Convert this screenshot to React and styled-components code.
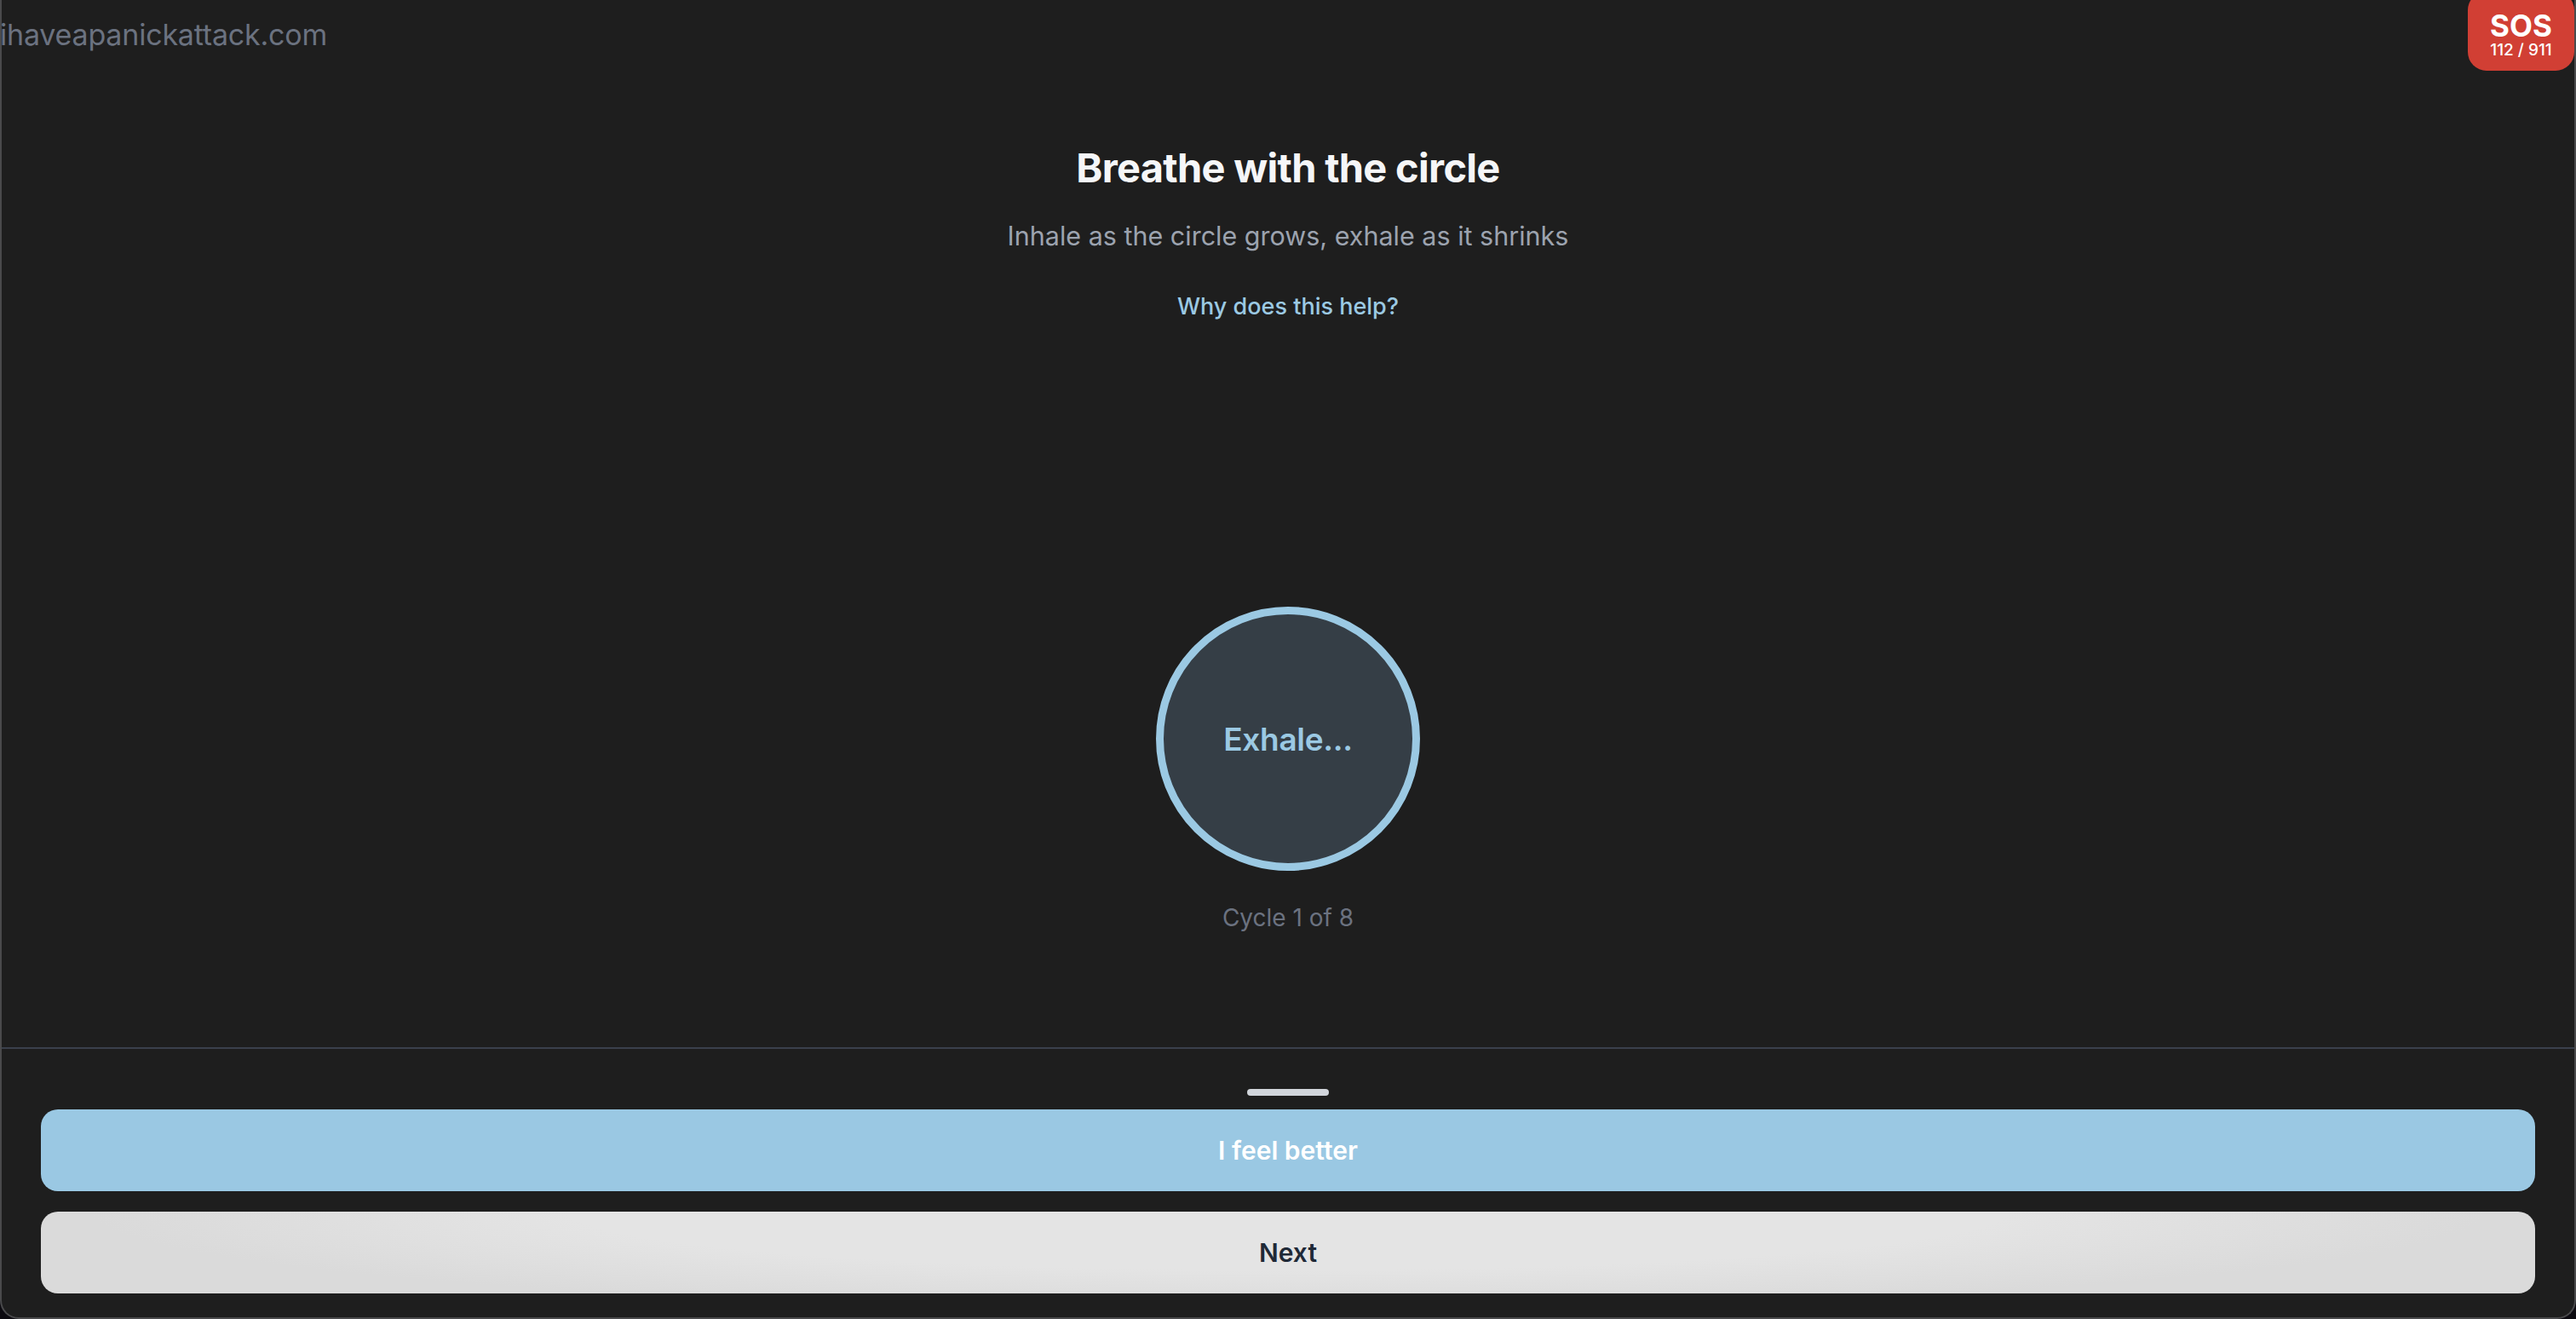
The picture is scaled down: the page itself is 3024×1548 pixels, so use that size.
import React from "react";
import styled, { createGlobalStyle } from "styled-components";

const GlobalStyle = createGlobalStyle`
  html, body {
    margin: 0;
    padding: 0;
    background: #0c0a10;
  }
  * {
    box-sizing: border-box;
  }
`;

const Frame = styled.div`
  display: flex;
  flex-direction: column;
  height: 100vh;
  background-color: #1e1e1e;
  border: 2px solid #4a4a4c;
  border-top: none;
  border-radius: 0 0 22px 22px;
  font-family: Inter, "Noto Sans", "Liberation Sans", sans-serif;
  overflow: hidden;
`;

const TopBar = styled.header`
  display: flex;
  justify-content: space-between;
  align-items: flex-start;
  height: 83px;
`;

const Domain = styled.span`
  margin-top: 20px;
  margin-left: -2px;
  font-size: 34px;
  line-height: 42px;
  color: #6b7280;
  letter-spacing: -0.2px;
`;

const SosButton = styled.button`
  display: flex;
  flex-direction: column;
  align-items: center;
  justify-content: center;
  width: 125px;
  height: 93px;
  margin-top: -10px;
  padding: 8px 0 0;
  border: none;
  border-radius: 22px;
  background-color: #d13f34;
  color: #ffffff;
  font-family: inherit;
  cursor: pointer;
`;

const SosLabel = styled.span`
  font-size: 35px;
  font-weight: 700;
  line-height: 34px;
  margin-top: 2px;
`;

const SosNumbers = styled.span`
  font-size: 19px;
  font-weight: 500;
  line-height: 24px;
`;

const Main = styled.main`
  flex: 1;
  display: flex;
  flex-direction: column;
  align-items: center;
`;

const Title = styled.h1`
  margin: 86px 0 0;
  font-size: 47px;
  font-weight: 700;
  line-height: 56px;
  color: #f5f6f8;
  letter-spacing: -0.7px;
`;

const Subtitle = styled.p`
  margin: 30px 0 0;
  font-size: 30.5px;
  line-height: 44px;
  color: #9ca3af;
`;

const HelpLink = styled.a`
  margin-top: 41px;
  font-size: 27px;
  line-height: 40px;
  font-weight: 500;
  color: #9bc9e3;
  text-decoration: none;
  cursor: pointer;
`;

const Circle = styled.div`
  display: flex;
  align-items: center;
  justify-content: center;
  width: 310px;
  height: 310px;
  margin-top: 332px;
  border-radius: 50%;
  border: 9px solid #9bc9e3;
  background-color: #353e46;
`;

const Phase = styled.span`
  font-size: 37px;
  font-weight: 600;
  color: #9bc9e3;
  letter-spacing: -0.3px;
`;

const CycleText = styled.p`
  margin: 35px 0 0;
  font-size: 28px;
  line-height: 40px;
  color: #6b7280;
`;

const Sheet = styled.footer`
  display: flex;
  flex-direction: column;
  align-items: center;
  gap: 24px;
  padding: 47px 46px 28px 46px;
  border-top: 2px solid #3a404c;
`;

const Handle = styled.div`
  width: 96px;
  height: 8px;
  margin-bottom: -8px;
  border-radius: 4px;
  background-color: #d1d5db;
`;

const ActionButton = styled.button`
  width: 100%;
  height: 96px;
  border: none;
  border-radius: 20px;
  font-family: inherit;
  font-size: 30px;
  font-weight: 600;
  cursor: pointer;
  color: ${(props) => (props.primary ? "#ffffff" : "#1f2937")};
  background: ${(props) =>
    props.primary
      ? "#9ac8e3"
      : "radial-gradient(ellipse 48% 120% at 50% 0%, #e4e4e4 60%, #dadada 100%), #e4e4e4"};
`;

const App = () => {
  return (
    <>
      <GlobalStyle />
      <Frame>
        <TopBar>
          <Domain>ihaveapanickattack.com</Domain>
          <SosButton>
            <SosLabel>SOS</SosLabel>
            <SosNumbers>112 / 911</SosNumbers>
          </SosButton>
        </TopBar>

        <Main>
          <Title>Breathe with the circle</Title>
          <Subtitle>Inhale as the circle grows, exhale as it shrinks</Subtitle>
          <HelpLink>Why does this help?</HelpLink>
          <Circle>
            <Phase>Exhale...</Phase>
          </Circle>
          <CycleText>Cycle 1 of 8</CycleText>
        </Main>

        <Sheet>
          <Handle />
          <ActionButton primary>I feel better</ActionButton>
          <ActionButton>Next</ActionButton>
        </Sheet>
      </Frame>
    </>
  );
};

export default App;
